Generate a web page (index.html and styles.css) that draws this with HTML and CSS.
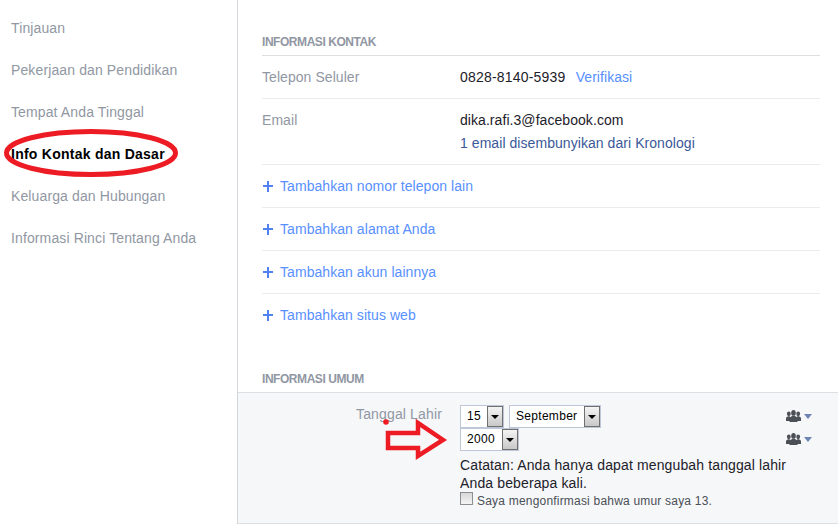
FILE: index.html
```html
<!DOCTYPE html>
<html lang="id">
<head>
<meta charset="utf-8">
<title>Info Kontak dan Dasar</title>
<link rel="stylesheet" href="styles.css">
</head>
<body>
<div class="page">
  <nav class="side">
    <a class="side-item">Tinjauan</a>
    <a class="side-item">Pekerjaan dan Pendidikan</a>
    <a class="side-item">Tempat Anda Tinggal</a>
    <a class="side-item active">Info Kontak dan Dasar</a>
    <a class="side-item">Keluarga dan Hubungan</a>
    <a class="side-item">Informasi Rinci Tentang Anda</a>
    <svg class="ellipse" width="176" height="50" viewBox="0 0 176 50"><ellipse cx="88" cy="25" rx="84.5" ry="21.5" fill="none" stroke="#ed1c24" stroke-width="5"/></svg>
  </nav>
  <main class="main">
    <section class="contact">
      <h2 class="heading">INFORMASI KONTAK</h2>
      <div class="row row-phone">
        <div class="label">Telepon Seluler</div>
        <div class="value phone">0828-8140-5939 <a class="link verify">Verifikasi</a></div>
      </div>
      <div class="row row-email">
        <div class="label">Email</div>
        <div class="value">
          <div>dika.rafi.3@facebook.com</div>
          <div class="hidden-note">1 email disembunyikan dari Kronologi</div>
        </div>
      </div>
      <a class="add"><span class="plus"></span>Tambahkan nomor telepon lain</a>
      <a class="add"><span class="plus"></span>Tambahkan alamat Anda</a>
      <a class="add"><span class="plus"></span>Tambahkan akun lainnya</a>
      <a class="add last"><span class="plus"></span>Tambahkan situs web</a>
    </section>
    <h2 class="heading general">INFORMASI UMUM</h2>
    <section class="panel">
      <div class="panel-label">Tanggal Lahir</div>
      <div class="panel-body">
        <div class="select-row">
          <span class="select s-day"><span class="select-text">15</span><span class="select-btn"></span></span>
          <span class="select s-month"><span class="select-text">September</span><span class="select-btn"></span></span>
        </div>
        <div class="select-row">
          <span class="select s-year"><span class="select-text">2000</span><span class="select-btn"></span></span>
        </div>
        <p class="note">Catatan: Anda hanya dapat mengubah tanggal lahir Anda beberapa kali.</p>
        <label class="confirm"><span class="check"></span>Saya mengonfirmasi bahwa umur saya 13.</label>
      </div>
      <div class="privacy">
        <span class="priv">
          <svg width="15" height="12" viewBox="0 0 15 12"><g fill="#4b4f56"><ellipse cx="2.800" cy="3.800" rx="1.900" ry="2.400"/><ellipse cx="12.200" cy="3.800" rx="1.900" ry="2.400"/><path d="M0 11V8.500C0 7.300 1 6.800 2 6.300h1.600L5 8v3zM15 11V8.500C15 7.300 14 6.800 13 6.300h-1.600L10 8v3z"/><ellipse cx="7.500" cy="2.900" rx="2.300" ry="2.900"/><path d="M3.500 12V8.500c0-1 1.600-2 2.600-2.500h2.800c1 .5 2.600 1.500 2.600 2.500V12z"/></g></svg>
          <i class="caret"></i>
        </span>
        <span class="priv">
          <svg width="15" height="12" viewBox="0 0 15 12"><g fill="#4b4f56"><ellipse cx="2.800" cy="3.800" rx="1.900" ry="2.400"/><ellipse cx="12.200" cy="3.800" rx="1.900" ry="2.400"/><path d="M0 11V8.500C0 7.300 1 6.800 2 6.300h1.600L5 8v3zM15 11V8.500C15 7.300 14 6.800 13 6.300h-1.600L10 8v3z"/><ellipse cx="7.500" cy="2.900" rx="2.300" ry="2.900"/><path d="M3.500 12V8.500c0-1 1.600-2 2.600-2.500h2.800c1 .5 2.600 1.500 2.600 2.500V12z"/></g></svg>
          <i class="caret"></i>
        </span>
      </div>
      <svg class="dot" width="6" height="6" viewBox="0 0 6 6"><circle cx="3" cy="3" r="2.800" fill="#ed1c24"/></svg>
      <svg class="arrow" width="64" height="42" viewBox="0 0 64 42"><path d="M3 14H33V4L58 21 33 37V29H3z" fill="none" stroke="#ed1c24" stroke-width="4.500"/></svg>
    </section>
  </main>
</div>
</body>
</html>
```

FILE: styles.css
```css
* { box-sizing: border-box; }
html, body { margin: 0; padding: 0; height: 100%; overflow: hidden; }
body { background: #fff; font-family: "Liberation Sans", Arial, sans-serif; font-size: 14px; color: #1d2129; letter-spacing: 0.06px; }
.page { display: flex; width: 838px; height: 524px; }

.side { position: relative; width: 238px; flex: none; border-right: 1px solid #d3d6db; padding-top: 7px; }
.side-item { display: block; height: 42px; line-height: 42px; padding-left: 11px; color: #9197a3; font-size: 14px; letter-spacing: 0.12px; }
.side-item.active { color: #000; font-weight: bold; letter-spacing: 0.25px; }
.ellipse { position: absolute; left: 3px; top: 128px; }

.main { flex: 1; min-width: 0; padding: 35px 18px 0 24px; }
.heading { margin: 0; height: 21px; font-size: 12px; line-height: 14px; font-weight: bold; color: #9197a3; border-bottom: 1px solid #dddfe2; letter-spacing: -0.45px; }
.row { display: flex; border-bottom: 1px solid #e9ebee; }
.row-phone { height: 43px; padding-top: 13px; }
.row-email { height: 66px; padding-top: 13px; }
.label { width: 198px; flex: none; color: #9197a3; line-height: 16px; }
.value { line-height: 16px; color: #1d2129; }
.phone { letter-spacing: 0.2px; }
.link { color: #5890ff; }
.verify { margin-left: 6px; letter-spacing: 0.06px; }
.hidden-note { margin-top: 7px; color: #3b5998; }

.add { display: flex; align-items: center; height: 43px; color: #5890ff; border-bottom: 1px solid #e9ebee; }
.add.last { height: 42px; border-bottom: 0; }
.plus { width: 10px; height: 11px; margin-left: 1px; margin-right: 7px; flex: none; background:
  linear-gradient(#4f81f0, #4f81f0) center / 10px 2px no-repeat,
  linear-gradient(#4f81f0, #4f81f0) center / 2px 11px no-repeat; }

.general { margin-top: 36px; height: 20px; border-bottom: 0; }
.panel { position: relative; display: flex; margin-left: -24px; margin-right: -18px; height: 132px; background: #f6f7f9; border-top: 1px solid #dddfe2; border-bottom: 1px solid #dddfe2; padding-top: 12px; }
.panel-label { width: 204px; flex: none; text-align: right; color: #9197a3; line-height: 18px; letter-spacing: 0.15px; }
.panel-body { width: 320px; flex: none; margin-left: 18px; }
.select-row { display: flex; gap: 5px; height: 23px; }
.select { display: flex; height: 23px; width: 44px; background: #fff; border: 1px solid #bdc7d8; align-items: stretch; font-size: 12px; color: #000; letter-spacing: 0.3px; }
.s-month { width: 92px; }
.s-year { width: 59px; }
.select-text { flex: 1; padding-left: 6px; line-height: 21px; }
.select-btn { position: relative; width: 16px; flex: none; border: 1px solid #707070; background: linear-gradient(#f4f4f4, #c8c8c8); }
.select-btn::after { content: ""; position: absolute; left: 3px; top: 8px; border: 4px solid transparent; border-top: 4px solid #000; border-bottom: 0; }
.note { margin: 5px 0 0; line-height: 18px; color: #1d2129; font-size: 14px; width: 358px; letter-spacing: 0.13px; }
.confirm { display: flex; align-items: center; margin-top: 1px; font-size: 12px; color: #4b4f56; height: 16px; letter-spacing: 0.2px; white-space: nowrap; }
.check { width: 13px; height: 13px; margin-right: 4px; align-self: flex-start; margin-top: -1px; border: 1px solid #8e8e8e; background: linear-gradient(#d8d8d8, #f4f4f4); flex: none; }
.privacy { display: flex; flex-direction: column; gap: 11px; margin-left: auto; padding-right: 26px; padding-top: 5px; }
.priv { display: flex; align-items: center; gap: 3px; height: 12px; }
.caret { display: block; width: 0; height: 0; border-left: 4.500px solid transparent; border-right: 4.500px solid transparent; border-top: 5px solid #6d84b4; }
.dot { position: absolute; left: 145px; top: 26px; }
.arrow { position: absolute; left: 147px; top: 26px; }
```
